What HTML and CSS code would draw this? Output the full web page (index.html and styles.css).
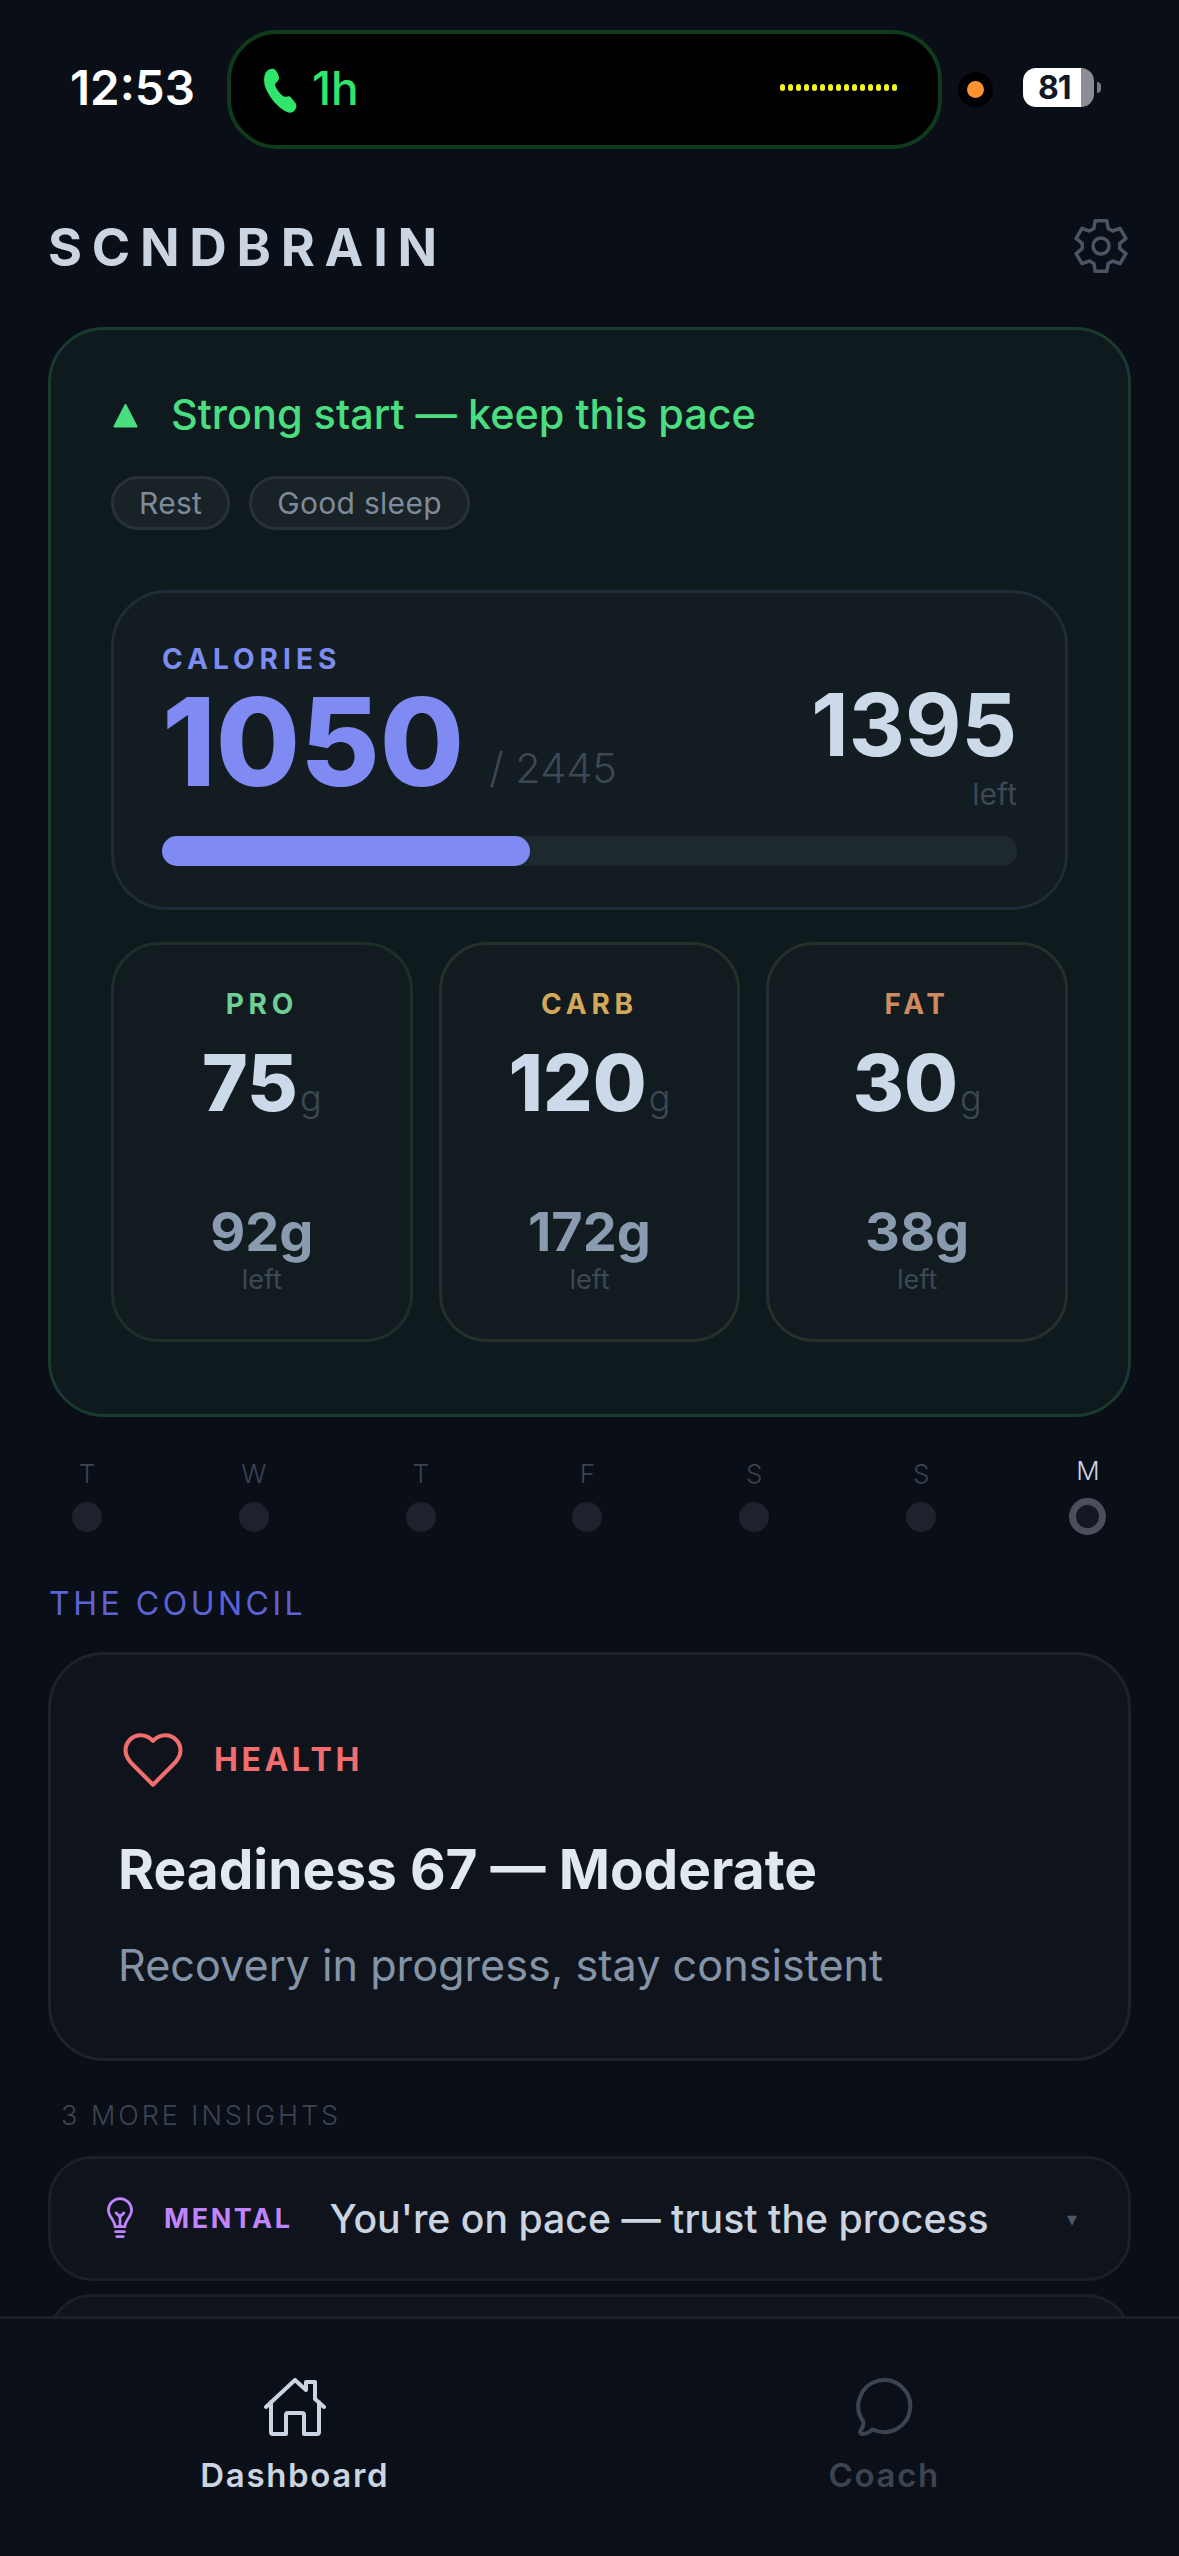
FILE: index.html
```html
<!DOCTYPE html>
<html lang="en">
<head>
    <meta charset="UTF-8">
    <title>SCNDBRAIN</title>
    <link rel="stylesheet" href="styles.css">
</head>
<body>

<div class="screen">
    <div class="statusbar">
        <span class="clock">12:53</span>
        <div class="island">
            <svg class="phone" viewBox="0 0 34 46"><path d="M3 4C5 1 9 0 11 1C13 2 15 5 16 9C16.500 11 15 13 13 15C12 16 12 17 12.500 18.500C14 22 17 25.500 20 28C21.500 29 23 29 24.500 28.500C26 28 27 28.500 28 29.500L32.500 35C34 37 33.500 40 32 42C30 44.500 27 45.500 24 44C15 40 7 30 3 21C.5 15 .5 8 3 4Z"/></svg>
            <span class="call-time">1h</span>
            <div class="wave">
                <i></i><i></i><i></i><i></i><i></i><i></i><i></i><i></i><i></i><i></i><i></i><i></i><i></i><i></i><i></i>
            </div>
        </div>
        <div class="rec"><i></i></div>
        <div class="battery"><span>81</span></div>
    </div>

    <div class="topbar">
        <h1>SCNDBRAIN</h1>
        <svg class="gear" viewBox="0 0 54 54"><polygon points="19.900,9.400 21.150,1.700 32.850,1.700 34.100,9.400 38.700,12 46,9.300 51.900,19.400 45.800,24.350 45.800,29.650 51.900,34.600 46,44.700 38.700,42 34.100,44.600 32.850,52.300 21.150,52.300 19.900,44.600 15.300,42 8,44.700 2.100,34.600 8.200,29.650 8.200,24.350 2.100,19.400 8,9.300 15.300,12"/><circle cx="27" cy="27" r="8"/></svg>
    </div>

    <div class="today">
        <div class="verdict">
            <svg class="tri" viewBox="0 0 25 25"><polygon points="12.500,2 23.500,23.500 1.500,23.500"/></svg>
            <span>Strong start — keep this pace</span>
        </div>
        <div class="pills">
            <span class="pill">Rest</span>
            <span class="pill">Good sleep</span>
        </div>

        <div class="calories">
            <div class="cal-top">
                <div>
                    <div class="cal-label">CALORIES</div>
                    <div class="cal-eaten"><b>1050</b><span>/ 2445</span></div>
                </div>
                <div class="cal-left">
                    <b>1395</b>
                    <span>left</span>
                </div>
            </div>
            <div class="bar"><div class="bar-fill" style="width:43%"></div></div>
        </div>

        <div class="macros">
            <div class="macro macro-pro">
                <div class="macro-name">PRO</div>
                <div class="macro-val"><b>75</b><span>g</span></div>
                <div class="macro-left">92g</div>
                <div class="macro-sub">left</div>
            </div>
            <div class="macro macro-carb">
                <div class="macro-name">CARB</div>
                <div class="macro-val"><b>120</b><span>g</span></div>
                <div class="macro-left">172g</div>
                <div class="macro-sub">left</div>
            </div>
            <div class="macro macro-fat">
                <div class="macro-name">FAT</div>
                <div class="macro-val"><b>30</b><span>g</span></div>
                <div class="macro-left">38g</div>
                <div class="macro-sub">left</div>
            </div>
        </div>
    </div>

    <div class="week">
        <div class="day"><span>T</span><i></i></div>
        <div class="day"><span>W</span><i></i></div>
        <div class="day"><span>T</span><i></i></div>
        <div class="day"><span>F</span><i></i></div>
        <div class="day"><span>S</span><i></i></div>
        <div class="day"><span>S</span><i></i></div>
        <div class="day current"><span>M</span><i></i></div>
    </div>

    <div class="council-title">THE COUNCIL</div>
    <div class="council">
        <div class="council-head">
            <svg class="heart" viewBox="0 0 24 24"><path d="M19 14c1.490-1.460 3-3.210 3-5.500A5.500 5.500 0 0 0 16.500 3c-1.760 0-3 .5-4.500 2-1.500-1.500-2.740-2-4.500-2A5.500 5.500 0 0 0 2 8.500c0 2.300 1.500 4.050 3 5.500l7 7Z"/></svg>
            <span>HEALTH</span>
        </div>
        <h2>Readiness 67 — Moderate</h2>
        <p>Recovery in progress, stay consistent</p>
    </div>

    <div class="more-title">3 MORE INSIGHTS</div>
    <div class="insight">
        <svg class="bulb" viewBox="0 0 24 40"><path d="M7.500 27c0-3-1-4.500-3-7.500C3 17.200 1.500 15 1.500 12a10.500 10.500 0 0 1 21 0c0 3-1.500 5.200-3 7.500-2 3-3 4.500-3 7.500z"/><path d="M12 27V17M8.500 14.500 12 18l3.500-3.500M8 31.500h8M9 36h6"/></svg>
        <span class="insight-tag">MENTAL</span>
        <span class="insight-text">You're on pace — trust the process</span>
        <span class="insight-arrow">▾</span>
    </div>
    <div class="insight"></div>

    <div class="nav">
        <div class="nav-item active">
            <svg viewBox="0 0 62 58"><path d="M2 29 31 2l11 10V4h9v17l9 8M7 24v30a2 2 0 0 0 2 2h13V37a2 2 0 0 1 2-2h14a2 2 0 0 1 2 2v19h13a2 2 0 0 0 2-2V24"/></svg>
            <span>Dashboard</span>
        </div>
        <div class="nav-item">
            <svg viewBox="0 0 62 58"><path d="M20 51.500A26 26 0 1 0 10 43c1 3 .5 6-2.500 9.500-1 1.800 0 3.500 2 3.500 3 0 5.500-1 8-3 .8-.8 1.500-1.200 2.500-1.500Z"/></svg>
            <span>Coach</span>
        </div>
    </div>
</div>

</body>
</html>
```

FILE: styles.css
```css
*{
    margin: 0;
    padding: 0;
    box-sizing: border-box;
}
body{
    background-color: #0a0e17;
    font-family: Inter, "Noto Sans", sans-serif;
    color: #cbd5e1;
}
.screen{
    width: 1179px;
    height: 2556px;
    overflow: hidden;
    position: relative;
    padding: 0 49px;
}

/* status bar */
.statusbar{
    height: 150px;
    padding-top: 30px;
    margin: 0 -49px;
    display: flex;
    align-items: flex-start;
}
.clock{
    width: 227px;
    padding-left: 70px;
    margin-top: 33px;
    font-size: 47.5px;
    line-height: 50px;
    font-weight: 600;
    color: #fff;
}
.island{
    width: 715px;
    height: 119px;
    border: 4px solid #0f3a1c;
    border-radius: 50px;
    background-color: #000;
    display: flex;
    align-items: flex-start;
    padding: 34px 41px 0 32px;
}
.phone{
    width: 34px;
    height: 46px;
    fill: #30e56c;
}
.call-time{
    margin: -5px 0 0 15px;
    font-size: 46px;
    line-height: 50px;
    font-weight: 500;
    color: #30e56c;
}
.wave{
    margin-left: auto;
    margin-top: 16px;
    display: flex;
    gap: 3px;
}
.wave i{
    width: 5px;
    height: 7px;
    border-radius: 3px;
    background-color: #f2f21c;
}
.rec{
    width: 35px;
    height: 35px;
    margin: 42px 0 0 16px;
    border-radius: 50%;
    background-color: #000;
    display: flex;
    align-items: center;
    justify-content: center;
}
.rec i{
    width: 17px;
    height: 17px;
    border-radius: 50%;
    background-color: #ff9330;
}
.battery{
    width: 71px;
    height: 39px;
    margin: 38px 0 0 30px;
    border-radius: 13px;
    background: linear-gradient(90deg, #fff 0, #fff 82%, #8d8d93 82%);
    position: relative;
    color: #111827;
    font-size: 32px;
    line-height: 39px;
    font-weight: 700;
    letter-spacing: -1px;
    padding-left: 15px;
}
.battery:after{
    content: "";
    position: absolute;
    left: 74px;
    top: 14px;
    width: 4px;
    height: 11px;
    border-radius: 0 4px 4px 0;
    background-color: #77777c;
}

/* title */
.topbar{
    height: 177px;
    display: flex;
    justify-content: space-between;
    padding: 66px 2px 0 0;
}
h1{
    margin-left: -1px;
    font-size: 52px;
    line-height: 64px;
    font-weight: 700;
    letter-spacing: 0.187em;
    color: #cbd5e1;
}
.gear{
    width: 54px;
    height: 54px;
    margin-top: 3px;
    fill: none;
    stroke: #4b5563;
    stroke-width: 3.5;
    stroke-linejoin: round;
}

/* today card */
.today{
    height: 1090px;
    padding: 0 60px;
    border: 3px solid #1a3a2e;
    border-radius: 56px;
    background-color: #0f1a1f;
    margin: 0 -1px;
}
.verdict{
    height: 112px;
    padding-top: 56px;
    display: flex;
    align-items: flex-start;
    font-size: 41.4px;
    line-height: 56px;
    font-weight: 500;
    color: #4ade80;
}
.tri{
    width: 25px;
    height: 25px;
    margin: 17px 33px 0 2px;
    fill: #4ade80;
    stroke: #4ade80;
    stroke-width: 2;
    stroke-linejoin: round;
}
.pills{
    display: flex;
    gap: 19px;
    margin-top: 34px;
}
.pill{
    height: 54px;
    padding: 0 25px;
    border: 3px solid #283137;
    border-radius: 27px;
    background-color: #192227;
    font-size: 30px;
    line-height: 48px;
    color: #7d8b9b;
    letter-spacing: 0.01em;
}
.calories{
    height: 320px;
    margin-top: 60px;
    padding: 51px 48px 0 48px;
    border: 3px solid #1f2c38;
    border-radius: 56px;
    background-color: #121c21;
}
.cal-top{
    height: 192px;
    display: flex;
    justify-content: space-between;
}
.cal-label{
    font-size: 28px;
    line-height: 30px;
    font-weight: 700;
    letter-spacing: 0.18em;
    color: #7c8cf0;
}
.cal-eaten{
    display: flex;
    align-items: flex-end;
    margin-top: 4px;
}
.cal-eaten b{
    font-size: 122px;
    line-height: 128px;
    font-weight: 800;
    color: #7f8bf3;
}
.cal-eaten span{
    margin: 0 0 13px 25px;
    font-size: 41.5px;
    line-height: 50px;
    font-weight: 300;
    color: #3d4855;
}
.cal-left{
    text-align: right;
    padding-top: 35px;
}
.cal-left b{
    display: block;
    font-size: 87px;
    line-height: 92px;
    font-weight: 700;
    color: #cbd9e8;
}
.cal-left span{
    display: block;
    margin-top: 5px;
    font-size: 30px;
    line-height: 36px;
    color: #3d4855;
}
.bar{
    height: 30px;
    border-radius: 15px;
    background-color: #1e292f;
}
.bar-fill{
    height: 30px;
    border-radius: 15px;
    background-color: #7f8bf3;
}
.macros{
    display: grid;
    grid-template-columns: repeat(3, 1fr);
    gap: 26px;
    margin-top: 32px;
}
.macro{
    height: 400px;
    padding-top: 43px;
    border: 3px solid #1c3029;
    border-radius: 48px;
    background-color: #121c20;
    text-align: center;
}
.macro-carb, .macro-fat{
    border-color: #25302a;
}
.macro-name{
    font-size: 28px;
    line-height: 32px;
    font-weight: 700;
    letter-spacing: 0.17em;
}
.macro-pro .macro-name{ color: #6fcf97; }
.macro-carb .macro-name{ color: #d4a85a; }
.macro-fat .macro-name{ color: #d08a60; }
.macro-val{
    margin-top: 18px;
    height: 90px;
    display: flex;
    align-items: baseline;
    justify-content: center;
}
.macro-val b{
    font-size: 78px;
    line-height: 90px;
    font-weight: 800;
    color: #cbd9e8;
}
.macro-val span{
    margin-left: 2px;
    font-size: 36px;
    font-weight: 300;
    color: #3d4855;
}
.macro-left{
    margin-top: 72px;
    font-size: 54px;
    line-height: 64px;
    font-weight: 700;
    color: #8a9bb0;
}
.macro-sub{
    font-size: 27px;
    line-height: 32px;
    color: #3d4855;
}

/* week strip */
.week{
    display: flex;
    justify-content: space-between;
    padding: 39px 10px 0 6px;
    height: 167px;
}
.day{
    width: 64px;
    text-align: center;
}
.day span{
    display: block;
    height: 40px;
    font-size: 26px;
    line-height: 36px;
    font-weight: 300;
    color: #3b4452;
}
.day i{
    display: block;
    width: 30px;
    height: 30px;
    margin: 6px auto 0;
    border-radius: 50%;
    background-color: #1e222d;
}
.current span{
    color: #cbd5e1;
    margin-top: -3px;
}
.current i{
    width: 37px;
    height: 37px;
    margin-top: 5px;
    border: 7px solid #4b4f5c;
    background-color: #141822;
}

/* council */
.council-title{
    font-size: 32px;
    line-height: 40px;
    letter-spacing: 0.11em;
    color: #5b63d6;
}
.council{
    height: 409px;
    margin: 28px -1px 0;
    padding: 72px 0 0 67px;
    border: 3px solid #1e222c;
    border-radius: 56px;
    background-color: #0f131c;
}
.council-head{
    display: flex;
    align-items: center;
    gap: 28px;
    font-size: 32px;
    line-height: 60px;
    font-weight: 700;
    letter-spacing: 0.11em;
    color: #f26d6d;
    padding-left: 2px;
}
.heart{
    width: 66px;
    height: 66px;
    fill: none;
    stroke: #f26d6d;
    stroke-width: 1.5;
    stroke-linecap: round;
    stroke-linejoin: round;
}
h2{
    margin-top: 41px;
    font-size: 55px;
    line-height: 70px;
    font-weight: 700;
    color: #e2e8f0;
}
.council p{
    margin-top: 32px;
    font-size: 43.2px;
    line-height: 58px;
    color: #8494a6;
}
.more-title{
    margin: 38px 0 0 12px;
    font-size: 27px;
    line-height: 34px;
    font-weight: 300;
    letter-spacing: 0.11em;
    color: #3d4451;
}
.insight{
    height: 125px;
    margin: 23px -1px 13px;
    padding: 0 51px 0 53px;
    border: 3px solid #1a1f29;
    border-radius: 44px;
    background-color: #0f131c;
    display: flex;
    align-items: center;
}
.insight + .insight{
    margin-top: 0;
}
.bulb{
    width: 32px;
    height: 44px;
    fill: none;
    stroke: #c084fc;
    stroke-width: 2.5;
    stroke-linecap: round;
    stroke-linejoin: round;
    flex: none;
}
.insight-tag{
    margin-left: 28px;
    font-size: 27px;
    font-weight: 700;
    letter-spacing: 0.095em;
    color: #c084fc;
}
.insight-text{
    margin-left: 37px;
    font-size: 39.2px;
    font-weight: 500;
    color: #cbd5e1;
}
.insight-arrow{
    margin-left: auto;
    font-size: 20px;
    color: #4b5563;
}

/* bottom nav, sits over the list */
.nav{
    position: absolute;
    left: 0;
    right: 0;
    bottom: 0;
    height: 240px;
    padding-top: 59px;
    border-top: 3px solid #1a1f29;
    background-color: #0a0f18;
    display: flex;
}
.nav-item{
    flex: 1;
    display: flex;
    flex-direction: column;
    align-items: center;
    font-size: 33px;
    line-height: 44px;
    font-weight: 600;
    letter-spacing: 0.05em;
    color: #3d4451;
}
.nav-item svg{
    width: 62px;
    height: 58px;
    fill: none;
    stroke: #3d4451;
    stroke-width: 4;
    stroke-linecap: round;
    stroke-linejoin: round;
    margin-bottom: 17px;
}
.active{
    color: #cbd5e1;
}
.active svg{
    stroke: #cbd5e1;
}
```
